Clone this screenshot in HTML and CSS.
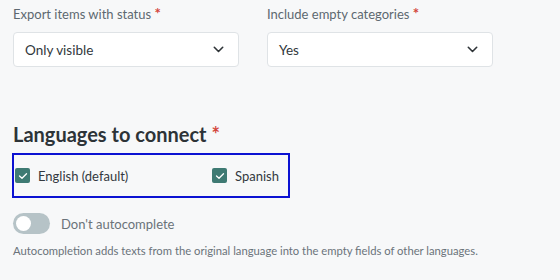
FILE: index.html
```html
<!DOCTYPE html>
<html>
<head>
<meta charset="utf-8">
<link rel="stylesheet" href="styles.css">
</head>
<body>
<div class="page">
  <div class="fields">
    <div class="field">
      <div class="label">Export items with status <span class="req">*</span></div>
      <div class="select"><span>Only visible</span>
        <svg class="chev" width="11" height="7" viewBox="0 0 11 7"><path d="M1.3 1.3 L5.5 5.5 L9.7 1.3" fill="none" stroke="#2f3438" stroke-width="1.6" stroke-linecap="round" stroke-linejoin="round"/></svg>
      </div>
    </div>
    <div class="field">
      <div class="label">Include empty categories <span class="req">*</span></div>
      <div class="select"><span>Yes</span>
        <svg class="chev" width="11" height="7" viewBox="0 0 11 7"><path d="M1.3 1.3 L5.5 5.5 L9.7 1.3" fill="none" stroke="#2f3438" stroke-width="1.6" stroke-linecap="round" stroke-linejoin="round"/></svg>
      </div>
    </div>
  </div>

  <h2 class="heading">Languages to connect <span class="req">*</span></h2>

  <div class="langs">
    <label class="check"><span class="box"><svg width="10" height="8" viewBox="0 0 10 8"><path d="M1.5 4 L4 6.3 L8.5 1.7" fill="none" stroke="#fff" stroke-width="1.3" stroke-linecap="round" stroke-linejoin="round"/></svg></span>English (default)</label>
    <label class="check"><span class="box"><svg width="10" height="8" viewBox="0 0 10 8"><path d="M1.5 4 L4 6.3 L8.5 1.7" fill="none" stroke="#fff" stroke-width="1.3" stroke-linecap="round" stroke-linejoin="round"/></svg></span>Spanish</label>
  </div>

  <div class="toggle-row">
    <span class="toggle"><span class="knob"></span></span>
    <span class="toggle-label">Don't autocomplete</span>
  </div>
  <p class="help">Autocompletion adds texts from the original language into the empty fields of other languages.</p>
</div>
</body>
</html>
```

FILE: styles.css
```css
html, body {
  margin: 0;
  padding: 0;
  background: #f7f8f9;
}
body {
  font-family: "Lato", "Liberation Sans", sans-serif;
  width: 560px;
  height: 280px;
  overflow: hidden;
}
.page {
  padding: 4px 13px 0 13px;
}
.fields {
  display: grid;
  grid-template-columns: 226px 226px;
  column-gap: 28px;
}
.label {
  font-size: 13px;
  line-height: 20px;
  color: #5d6870;
  height: 20px;
}
.req {
  color: #d3463c;
}
.label .req {
  font-size: 15px;
  font-weight: 700;
  line-height: 0;
}
.select {
  margin-top: 8px;
  height: 33px;
  border: 1px solid #dfe3e6;
  border-radius: 4px;
  background: #fff;
  display: flex;
  align-items: center;
  justify-content: space-between;
  padding: 0 14px 0 11px;
  font-size: 13.5px;
  color: #31373c;
}
.chev {
  display: block;
}
.heading {
  margin: 55px 0 0 0;
  font-size: 20px;
  line-height: 24px;
  font-weight: 700;
  color: #2d3337;
}
.langs {
  margin: 7px 0 0 -1px;
  width: 273px;
  height: 41px;
  border: 2px solid #0c12d2;
  display: flex;
  align-items: center;
  justify-content: space-between;
  padding: 0 0 0 1px;
}
.check {
  display: flex;
  align-items: center;
  gap: 8px;
  font-size: 13px;
  color: #33393e;
  padding-right: 9px;
}
.box {
  width: 15px;
  height: 15px;
  border-radius: 2px;
  background: #3e7a73;
  display: flex;
  align-items: center;
  justify-content: center;
}
.box svg {
  display: block;
}
.toggle-row {
  margin-top: 15px;
  display: flex;
  align-items: center;
  gap: 11px;
}
.toggle {
  position: relative;
  width: 37px;
  height: 21px;
  border-radius: 11px;
  background: #b6c3c7;
}
.knob {
  position: absolute;
  left: 3px;
  top: 3px;
  width: 15px;
  height: 15px;
  border-radius: 50%;
  background: #fff;
}
.toggle-label {
  font-size: 13px;
  color: #6a737a;
}
.help {
  margin: 9px 0 0 0;
  font-size: 11.25px;
  line-height: 16px;
  color: #6a737a;
}
```
